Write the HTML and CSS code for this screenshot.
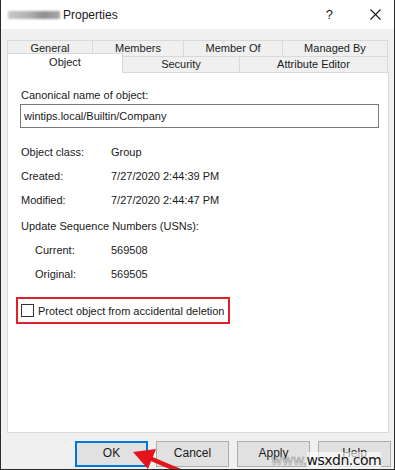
FILE: index.html
```html
<!DOCTYPE html>
<html lang="en">
<head>
    <meta charset="UTF-8">
    <title>Properties</title>
    <link rel="stylesheet" href="styles.css">
</head>
<body>
    <div class="window">
        <div class="titlebar">
            <span class="blur-name"></span>
            <span class="title">Properties</span>
            <span class="help">?</span>
            <span class="close">
                <svg width="11" height="11" viewBox="0 0 11 11">
                    <path d="M0.5 0.5 L10.5 10.5 M10.5 0.5 L0.5 10.5" stroke="#1a1a1a" stroke-width="1.1" fill="none"/>
                </svg>
            </span>
        </div>

        <div class="body">
            <div class="tab-row">
                <div class="tab w-general">General</div>
                <div class="tab w-members">Members</div>
                <div class="tab w-memberof">Member Of</div>
                <div class="tab w-managed">Managed By</div>
            </div>
            <div class="tab-row">
                <div class="tab active w-object">Object</div>
                <div class="tab w-security">Security</div>
                <div class="tab w-attr">Attribute Editor</div>
            </div>

            <div class="panel">
                <div class="label">Canonical name of object:</div>
                <div class="textbox">wintips.local/Builtin/Company</div>

                <div class="props">
                    <div class="prop">
                        <span class="key">Object class:</span>
                        <span class="val">Group</span>
                    </div>
                    <div class="prop">
                        <span class="key">Created:</span>
                        <span class="val">7/27/2020 2:44:39 PM</span>
                    </div>
                    <div class="prop">
                        <span class="key">Modified:</span>
                        <span class="val">7/27/2020 2:44:47 PM</span>
                    </div>
                    <div class="prop usn">Update Sequence Numbers (USNs):</div>
                    <div class="prop sub">
                        <span class="key">Current:</span>
                        <span class="val">569508</span>
                    </div>
                    <div class="prop sub">
                        <span class="key">Original:</span>
                        <span class="val">569505</span>
                    </div>
                </div>

                <div class="protect">
                    <span class="checkbox"></span>
                    <span class="protect-text">Protect object from accidental deletion</span>
                </div>
            </div>

            <div class="buttons">
                <button class="btn default">OK</button>
                <button class="btn">Cancel</button>
                <button class="btn">Apply</button>
                <button class="btn">Help</button>
            </div>
        </div>

        <svg class="arrow" width="70" height="40" viewBox="0 0 70 40">
            <line x1="16" y1="19" x2="56" y2="36" stroke="#e3151a" stroke-width="4.5"/>
            <polygon points="2,14 25,11 17,31" fill="#e3151a"/>
        </svg>

        <div class="watermark">
            <span class="www">www.</span><span class="site">wsxdn.com</span>
        </div>
    </div>
</body>
</html>
```

FILE: styles.css
```css
body {
    margin: 0;
    background-color: white;
    font-family: "Liberation Sans", Arial, sans-serif;
    font-size: 11px;
    color: #1a1a1a;
}
.window {
    position: relative;
    width: 395px;
    height: 470px;
    box-sizing: border-box;
    border-left: 1px solid #2b2b2b;
    border-right: 1px solid #2b2b2b;
    border-bottom: 1px solid #2b2b2b;
    background-color: #f0f0f0;
    overflow: hidden;
}
.titlebar {
    display: flex;
    align-items: center;
    height: 29px;
    background-color: white;
}
.blur-name {
    width: 52px;
    height: 8px;
    margin-left: 7px;
    margin-top: 1px;
    background: linear-gradient(90deg, #c8c8c8 0%, #b0b0b0 40%, #8f8f8f 70%, #a9a9a9 100%);
    filter: blur(1.2px);
}
.title {
    margin-left: 3px;
    font-size: 12px;
}
.help {
    margin-left: auto;
    font-size: 13px;
    margin-right: 37px;
}
.close {
    display: flex;
    margin-right: 13px;
}
.body {
    padding: 11px 5px 0 6px;
}
.tab-row {
    display: flex;
}
.tab {
    height: 16px;
    box-sizing: border-box;
    margin-left: -1px;
    border: 1px solid #d9d9d9;
    border-bottom: none;
    text-align: center;
    line-height: 15px;
    background-color: #f0f0f0;
}
.tab:first-child {
    margin-left: 0;
}
.tab.active {
    position: relative;
    z-index: 1;
    height: 20px;
    margin-top: -3px;
    margin-bottom: -1px;
    background-color: white;
    line-height: 17px;
}
.w-general { width: 86px; }
.w-members { width: 92px; }
.w-memberof { width: 100px; }
.w-managed { width: 106px; }
.w-object { width: 116px; }
.w-security { width: 118px; }
.w-attr { width: 149px; }

.panel {
    height: 361px;
    box-sizing: border-box;
    border: 1px solid #d9d9d9;
    background-color: white;
    padding: 14px 13px 0 13px;
}
.label {
    line-height: 16px;
}
.textbox {
    width: 359px;
    height: 24px;
    box-sizing: border-box;
    margin-top: 1px;
    margin-left: -1px;
    border: 1px solid #7a7a7a;
    padding-left: 3px;
    line-height: 22px;
}
.props {
    margin-top: 12px;
}
.prop {
    display: flex;
    height: 24px;
    align-items: center;
}
.prop .key {
    width: 90px;
}
.prop.usn {
    margin-top: 2px;
}
.prop.sub {
    padding-left: 14px;
}
.prop.sub .key {
    width: 76px;
}
.protect {
    display: flex;
    align-items: center;
    gap: 4px;
    width: 214px;
    height: 27px;
    box-sizing: border-box;
    margin-top: 11px;
    margin-left: -5px;
    padding-left: 3px;
    border: 2px solid #e0202a;
}
.protect-text {
    white-space: nowrap;
}
.checkbox {
    width: 13px;
    height: 13px;
    box-sizing: border-box;
    border: 1px solid #333;
    background-color: white;
}
.buttons {
    display: flex;
    justify-content: flex-end;
    gap: 8px;
    margin-top: 8px;
    margin-right: -2px;
}
.btn {
    width: 73px;
    height: 26px;
    box-sizing: border-box;
    border: 1px solid #adadad;
    background-color: #e1e1e1;
    font-family: "Liberation Sans", Arial, sans-serif;
    font-size: 12px;
    color: #1a1a1a;
    padding: 0 0 3px 0;
}
.btn.default {
    border: 2px solid #0078d7;
}
.arrow {
    position: absolute;
    left: 130px;
    top: 438px;
}
.watermark {
    position: absolute;
    left: 270px;
    top: 453px;
    font-family: "DejaVu Sans", sans-serif;
    font-size: 14px;
    line-height: 15px;
    letter-spacing: -0.5px;
}
.www {
    color: #ececec;
    -webkit-text-stroke: 0.6px #9a9a9a;
}
.site {
    color: #111;
    background-color: rgba(255, 255, 255, 0.6);
}
```
